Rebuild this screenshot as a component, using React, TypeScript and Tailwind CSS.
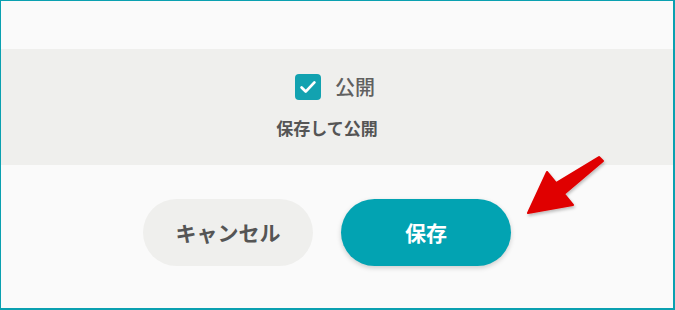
import React from "react";

const jp = { fontFamily: '"Noto Sans CJK JP", "Noto Sans", sans-serif' };

function Arrow() {
  return (
    <svg
      className="pointer-events-none absolute left-0 top-0"
      width="675"
      height="310"
      viewBox="0 0 675 310"
    >
      <defs>
        <filter id="sh" x="-20%" y="-20%" width="140%" height="140%">
          <feDropShadow dx="1" dy="2" stdDeviation="1.5" floodColor="#000" floodOpacity="0.25" />
        </filter>
      </defs>
      <polygon
        points="527,212 546,171 555,182 598,156 602,160 563,193 572,204"
        fill="#e00000"
        stroke="#e00000"
        strokeWidth="2"
        strokeLinejoin="round"
        filter="url(#sh)"
      />
    </svg>
  );
}

export default function App() {
  return (
    <div
      className="relative box-border h-[310px] w-[675px] overflow-hidden border-t border-l border-r-2 border-b-2 border-[#0aa0b0] bg-[#fafafa]"
      style={jp}
    >
      <div className="h-[48px]" />
      <div className="flex h-[116px] flex-col items-center bg-[#efefed] pt-[25px]">
        <label className="flex items-center gap-[14px] pr-[4px]">
          <span className="flex h-[26px] w-[26px] items-center justify-center rounded-[4px] bg-[#12a2b0]">
            <svg width="22" height="22" viewBox="0 0 24 24" fill="none" stroke="#fff" strokeWidth="3" strokeLinecap="round" strokeLinejoin="round">
              <path d="M5 12.5l4.5 4.5L19 7" />
            </svg>
          </span>
          <span className="text-[20px] font-medium leading-[26px] text-[#606060]">公開</span>
        </label>
        <div className="mt-[15px] pr-[20px] text-[17px] font-bold leading-[25px] text-[#555]">保存して公開</div>
      </div>
      <div className="flex justify-center gap-[28px] pt-[34px] pr-[20px]">
        <button className="h-[67px] w-[170px] rounded-full bg-[#efefed] text-[21px] font-bold text-[#555]">
          キャンセル
        </button>
        <button className="h-[67px] w-[170px] rounded-full bg-[#02a3b2] text-[21px] font-bold text-white shadow-[0_2px_5px_rgba(0,0,0,0.18)]">
          保存
        </button>
      </div>
      <Arrow />
    </div>
  );
}
